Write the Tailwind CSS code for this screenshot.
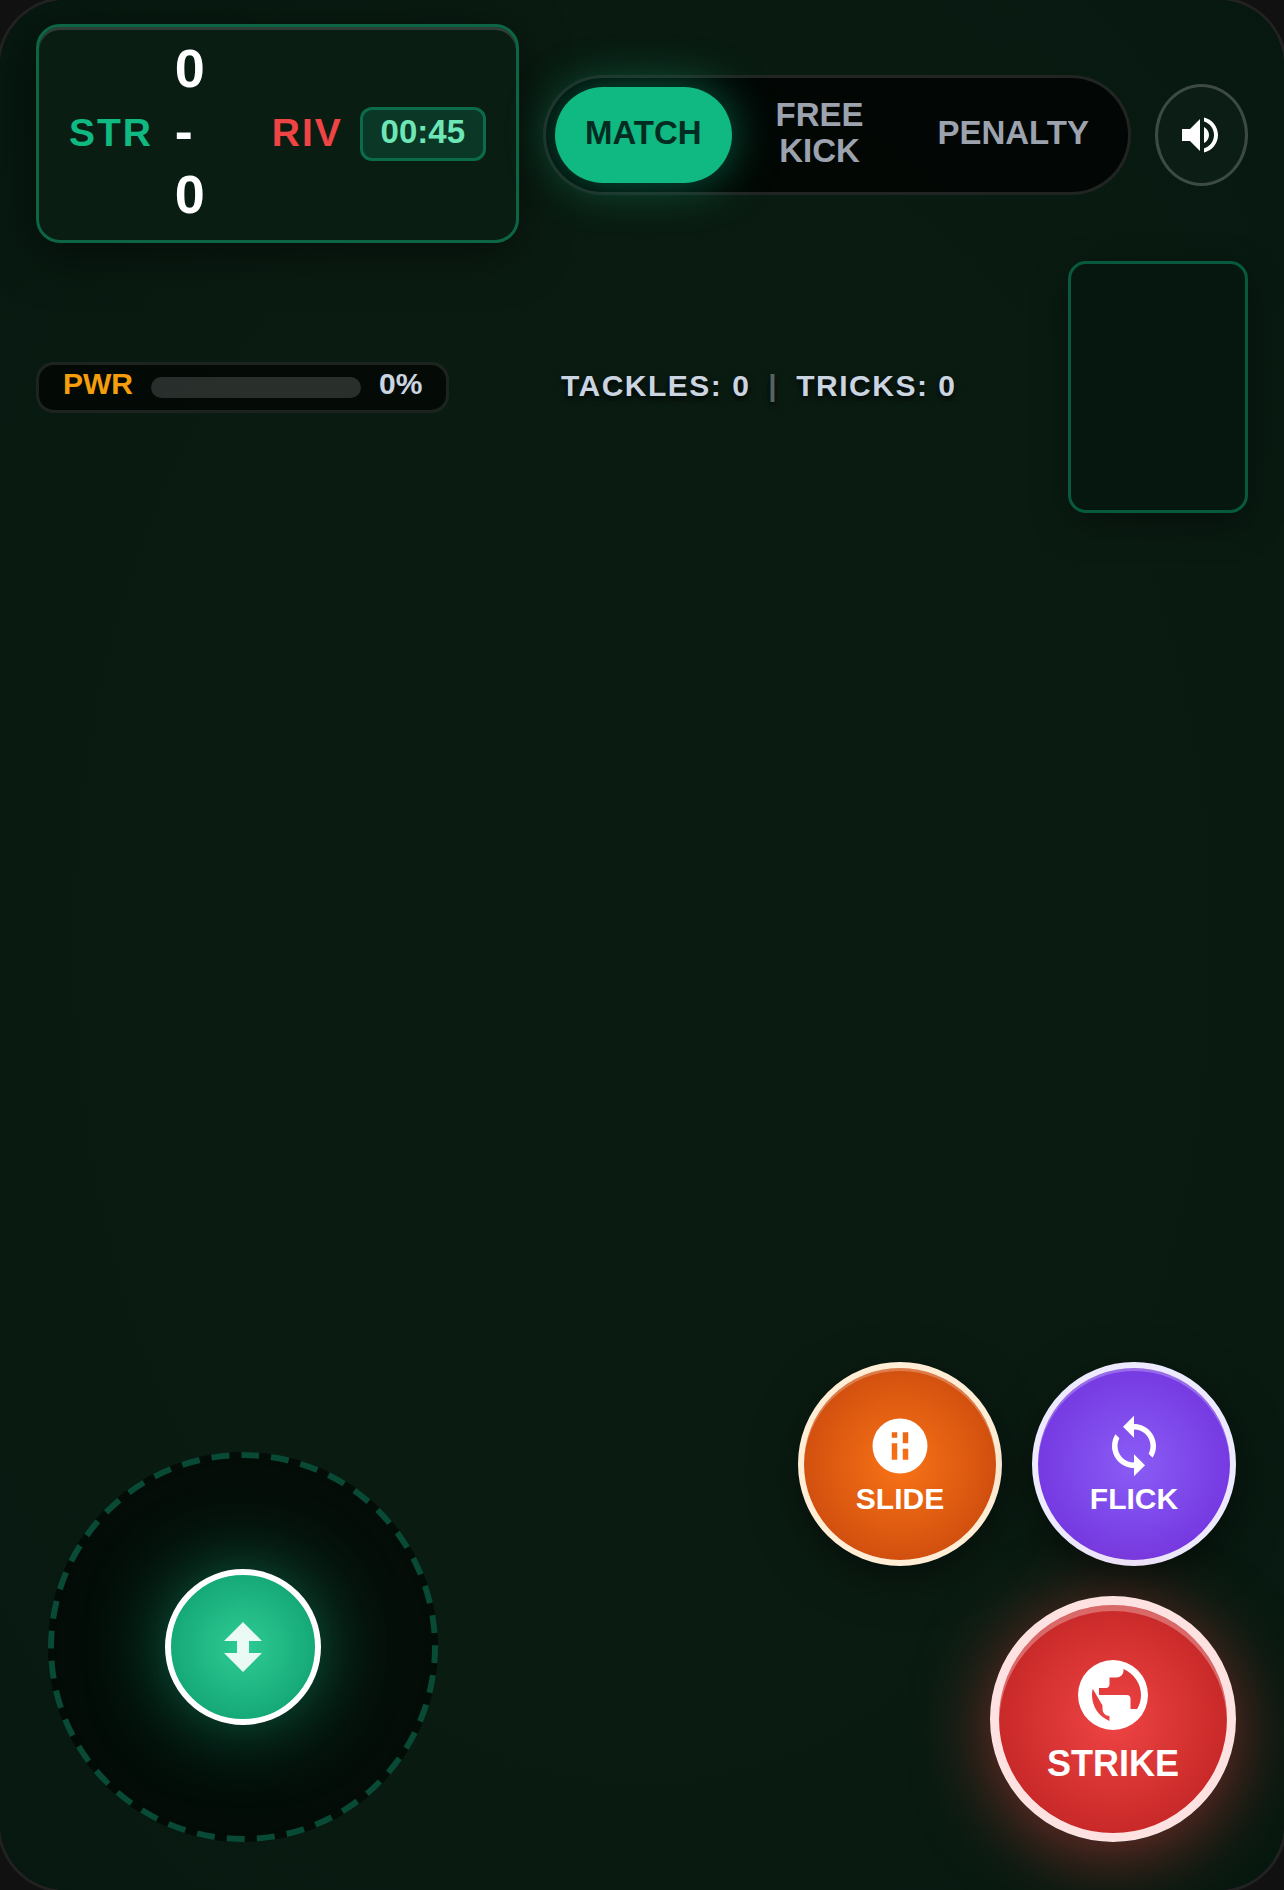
<!DOCTYPE html>
<html lang="en">
<head>
  <meta charset="UTF-8" />
  <meta name="viewport" content="width=device-width, initial-scale=1.0" />
  <title>Striker</title>
  <script src="https://cdn.jsdelivr.net/npm/@tailwindcss/browser@4"></script>
</head>
<body class="bg-[#111111] font-['Liberation_Sans',Arial,sans-serif] font-bold text-white">
  <main class="relative flex min-h-screen flex-col overflow-hidden rounded-[66px] bg-radial from-[#0a1c12] from-60% to-[#06180f] shadow-[0_0_0_3px_#222222]">

    <!-- top bar -->
    <header class="flex items-center gap-6 px-9 pt-6">
      <section aria-label="Score" class="mb-[3px] flex w-[483px] shrink-0 items-center rounded-3xl border-3 border-[#0c6646] bg-[#0a1d13] px-[30px] py-3 shadow-[0_12px_48px_rgba(0,0,0,0.5),inset_0_3px_0_rgba(255,255,255,0.15)]">
        <span class="text-[39px] tracking-wider text-[#10b981]">STR</span>
        <span class="-mt-0.5 ml-[22px] w-[97px] pb-0.5 text-[54px] leading-[63px]">0<br />-<br />0</span>
        <span class="text-[39px] tracking-wider text-[#ef4444]">RIV</span>
        <time class="ml-auto rounded-xl border-3 border-[#0b6b4a] bg-[#0b3727] px-[18px] pt-1 pb-2 text-[33px] leading-9 text-[#6ee7b7]">00:45</time>
      </section>

      <nav class="flex flex-1 gap-1.5 rounded-full border-3 border-white/12 bg-black/75 p-[9px] text-[33px] leading-9">
        <button type="button" class="rounded-full bg-[#10b981] px-[30px] pb-1 text-[#022c22] shadow-[0_0_45px_rgba(16,185,129,0.5)]">MATCH</button>
        <button type="button" class="flex-1 rounded-full px-[30px] pt-2.5 pb-3.5 text-[#9ca3af]">FREE KICK</button>
        <button type="button" class="rounded-full px-[30px] pb-1 text-[#9ca3af]">PENALTY</button>
      </nav>

      <button type="button" aria-label="Sound" class="flex h-[102px] w-[93px] shrink-0 items-center justify-center rounded-[50%] border-3 border-white/20 bg-white/2 pr-[3px]">
        <svg class="size-12" viewBox="0 0 24 24" fill="currentColor">
          <path d="M3 9v6h4l5 5V4L7 9H3zm13.500 3c0-1.770-1.020-3.290-2.500-4.030v8.050c1.480-.730 2.500-2.250 2.500-4.020zM14 3.230v2.060c2.890.860 5 3.540 5 6.710s-2.110 5.850-5 6.710v2.060c4.010-.910 7-4.490 7-8.770s-2.990-7.860-7-8.770z" />
        </svg>
      </button>
    </header>

    <!-- power, stats, minimap -->
    <section class="flex items-center justify-between px-9 pt-[15px] text-3xl">
      <div class="flex items-center gap-[18px] rounded-[18px] border-3 border-white/10 bg-black/60 py-1.5 pr-6 pl-6 leading-[33px]">
        <label for="power" class="-my-1 pb-2 text-[#f59e0b]">PWR</label>
        <div id="power" role="progressbar" aria-valuenow="0" class="h-[21px] w-[210px] rounded-full bg-white/15"></div>
        <span class="-my-1 pb-2 text-[#cbd5e1]">0%</span>
      </div>
      <p class="flex gap-[18px] pb-[3px] tracking-wider text-[#cbd5e1] [text-shadow:0_3px_6px_#000]">
        <span>TACKLES: 0</span>
        <span class="text-[#56645f]">|</span>
        <span>TRICKS: 0</span>
      </p>
      <div class="h-[252px] w-[180px] rounded-[18px] border-3 border-[#085a3e] bg-[#06170f] shadow-[0_12px_36px_rgba(0,0,0,0.4)]"></div>
    </section>

    <!-- touch controls -->
    <footer class="mt-auto flex items-end justify-between p-12">
      <div class="relative flex size-[390px] items-center justify-center rounded-full bg-black/40 shadow-[inset_0_0_90px_rgba(0,0,0,0.45)]">
        <svg class="absolute inset-0 -rotate-90" viewBox="0 0 390 390" fill="none" stroke="#084a35" stroke-width="6">
          <circle cx="195" cy="195" r="192" stroke-dasharray="18 12.160" stroke-dashoffset="2" />
        </svg>
        <button type="button" aria-label="Move" class="relative flex size-[156px] items-center justify-center rounded-full border-6 border-white bg-radial from-[#2ecc94] to-[#069b6d] shadow-[0_0_75px_rgba(16,185,129,0.5)]">
          <svg class="h-[50px] w-[38px]" viewBox="0 0 38 50" fill="#fff" fill-opacity=".9">
            <path d="M19 0l19 19H25v12h13L19 50 0 31h13V19H0z" />
          </svg>
        </button>
      </div>

      <div class="flex flex-col items-end gap-[30px]">
        <div class="flex gap-[30px] text-3xl leading-[33px]">
          <button type="button" class="flex size-[204px] flex-col items-center justify-center gap-[3px] rounded-full border-6 border-[#ffedd5] bg-radial from-[#f97316] to-[#c2410c] shadow-[0_12px_45px_rgba(0,0,0,0.5),inset_0_3px_0_rgba(255,255,255,0.25)]">
            <svg class="size-[66px]" viewBox="0 0 24 24" fill="currentColor" fill-rule="evenodd">
              <path d="M12 2a10 10 0 1 0 0 20 10 10 0 0 0 0-20zM9 7h2v2H9zM9 11h2v6H9zM13 7h2v4h-2zM13 13h2v4h-2z" />
            </svg>
            SLIDE
          </button>
          <button type="button" class="flex size-[204px] flex-col items-center justify-center gap-[3px] rounded-full border-6 border-[#ede9fe] bg-radial from-[#8b5cf6] to-[#6d28d9] shadow-[0_12px_45px_rgba(0,0,0,0.5),inset_0_3px_0_rgba(255,255,255,0.25)]">
            <svg class="size-[66px]" viewBox="0 0 24 24" fill="currentColor">
              <path d="M12 4V1L8 5l4 4V6c3.310 0 6 2.690 6 6 0 1.010-.250 1.970-.700 2.800l1.460 1.460C19.540 15.030 20 13.570 20 12c0-4.420-3.580-8-8-8zm0 14c-3.310 0-6-2.690-6-6 0-1.010.250-1.970.700-2.800L5.240 7.740C4.460 8.970 4 10.430 4 12c0 4.420 3.580 8 8 8v3l4-4-4-4v3z" />
            </svg>
            FLICK
          </button>
        </div>
        <button type="button" class="flex size-[246px] flex-col items-center justify-center gap-1.5 rounded-full border-9 border-[#fee2e2] bg-radial from-[#ef4444] to-[#b91c1c] text-4xl leading-[42px] shadow-[0_12px_75px_rgba(239,68,68,0.5),inset_0_6px_0_rgba(255,255,255,0.3)]">
          <svg class="size-[84px]" viewBox="0 0 24 24" fill="currentColor" fill-rule="evenodd">
            <path d="M12 2a10 10 0 1 0 0 20 10 10 0 0 0 0-20zM11 19.400C8 18.200 6 15.300 6 12c0-.600.050-1.200.200-1.800L9 15v1c0 1.100.900 2 2 2zM18.900 16H17v-3c0-.550-.450-1-1-1H8v-2h2c.550 0 1-.450 1-1V7h2c1.100 0 2-.900 2-2v-.400c3 1.300 5 4.200 5 7.400 0 1.500-.400 2.800-1.100 4z" />
          </svg>
          STRIKE
        </button>
      </div>
    </footer>
  </main>
</body>
</html>
